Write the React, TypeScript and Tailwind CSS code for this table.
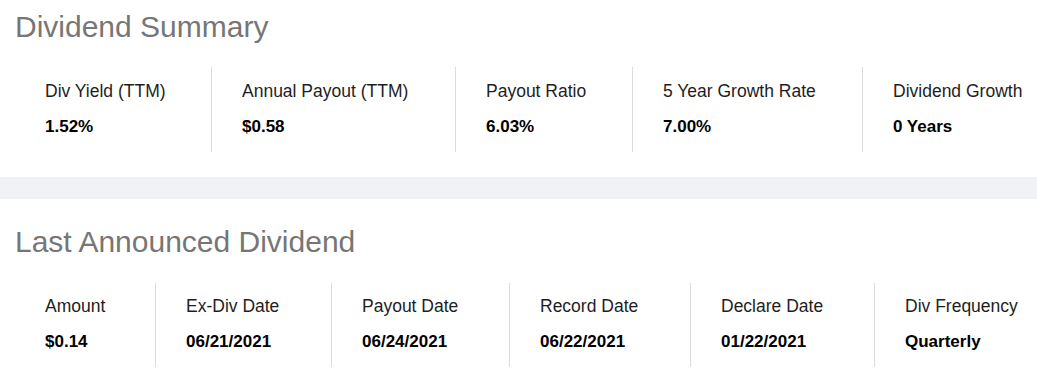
const summary = [
  { label: 'Div Yield (TTM)', value: '1.52%', w: 'w-[196px]' },
  { label: 'Annual Payout (TTM)', value: '$0.58', w: 'w-[244px]' },
  { label: 'Payout Ratio', value: '6.03%', w: 'w-[177px]' },
  { label: '5 Year Growth Rate', value: '7.00%', w: 'w-[230px]' },
  { label: 'Dividend Growth', value: '0 Years', w: 'w-[175px]' },
];

const lastDividend = [
  { label: 'Amount', value: '$0.14', w: 'w-[140px]' },
  { label: 'Ex-Div Date', value: '06/21/2021', w: 'w-[176px]' },
  { label: 'Payout Date', value: '06/24/2021', w: 'w-[178px]' },
  { label: 'Record Date', value: '06/22/2021', w: 'w-[181px]' },
  { label: 'Declare Date', value: '01/22/2021', w: 'w-[184px]' },
  { label: 'Div Frequency', value: 'Quarterly', w: 'w-[163px]' },
];

type Stat = { label: string; value: string; w: string };

function StatRow({ items, top }: { items: Stat[]; top: string }) {
  return (
    <div className="flex">
      {items.map((item, i) => (
        <div
          key={item.label}
          className={`${item.w} shrink-0 pl-[30px] ${top} pb-[15px] ${i > 0 ? 'border-l border-[#dcdcdc]' : ''}`}
        >
          <p className="whitespace-nowrap text-[17.5px] leading-[20px] text-[#1e1e1e]">{item.label}</p>
          <p className="mt-[16px] whitespace-nowrap text-[17px] font-bold leading-[20px] text-black">
            {item.value}
          </p>
        </div>
      ))}
    </div>
  );
}

export default function App() {
  return (
    <div className="h-[374px] w-[1037px] overflow-hidden bg-white font-['Liberation_Sans',Arial,sans-serif]">
      <section className="px-[15px] pt-[10px]">
        <h2 className="text-[30px] font-normal leading-[34px] text-[#767676]">Dividend Summary</h2>
        <div className="mt-[23px]">
          <StatRow items={summary} top="pt-[14px]" />
        </div>
      </section>

      <div className="mt-[25px] h-[22px] bg-[#f1f2f6]" />

      <section className="px-[15px] pt-[26px]">
        <h2 className="text-[30px] font-normal leading-[34px] text-[#767676]">Last Announced Dividend</h2>
        <div className="mt-[24px]">
          <StatRow items={lastDividend} top="pt-[13px]" />
        </div>
      </section>
    </div>
  );
}
